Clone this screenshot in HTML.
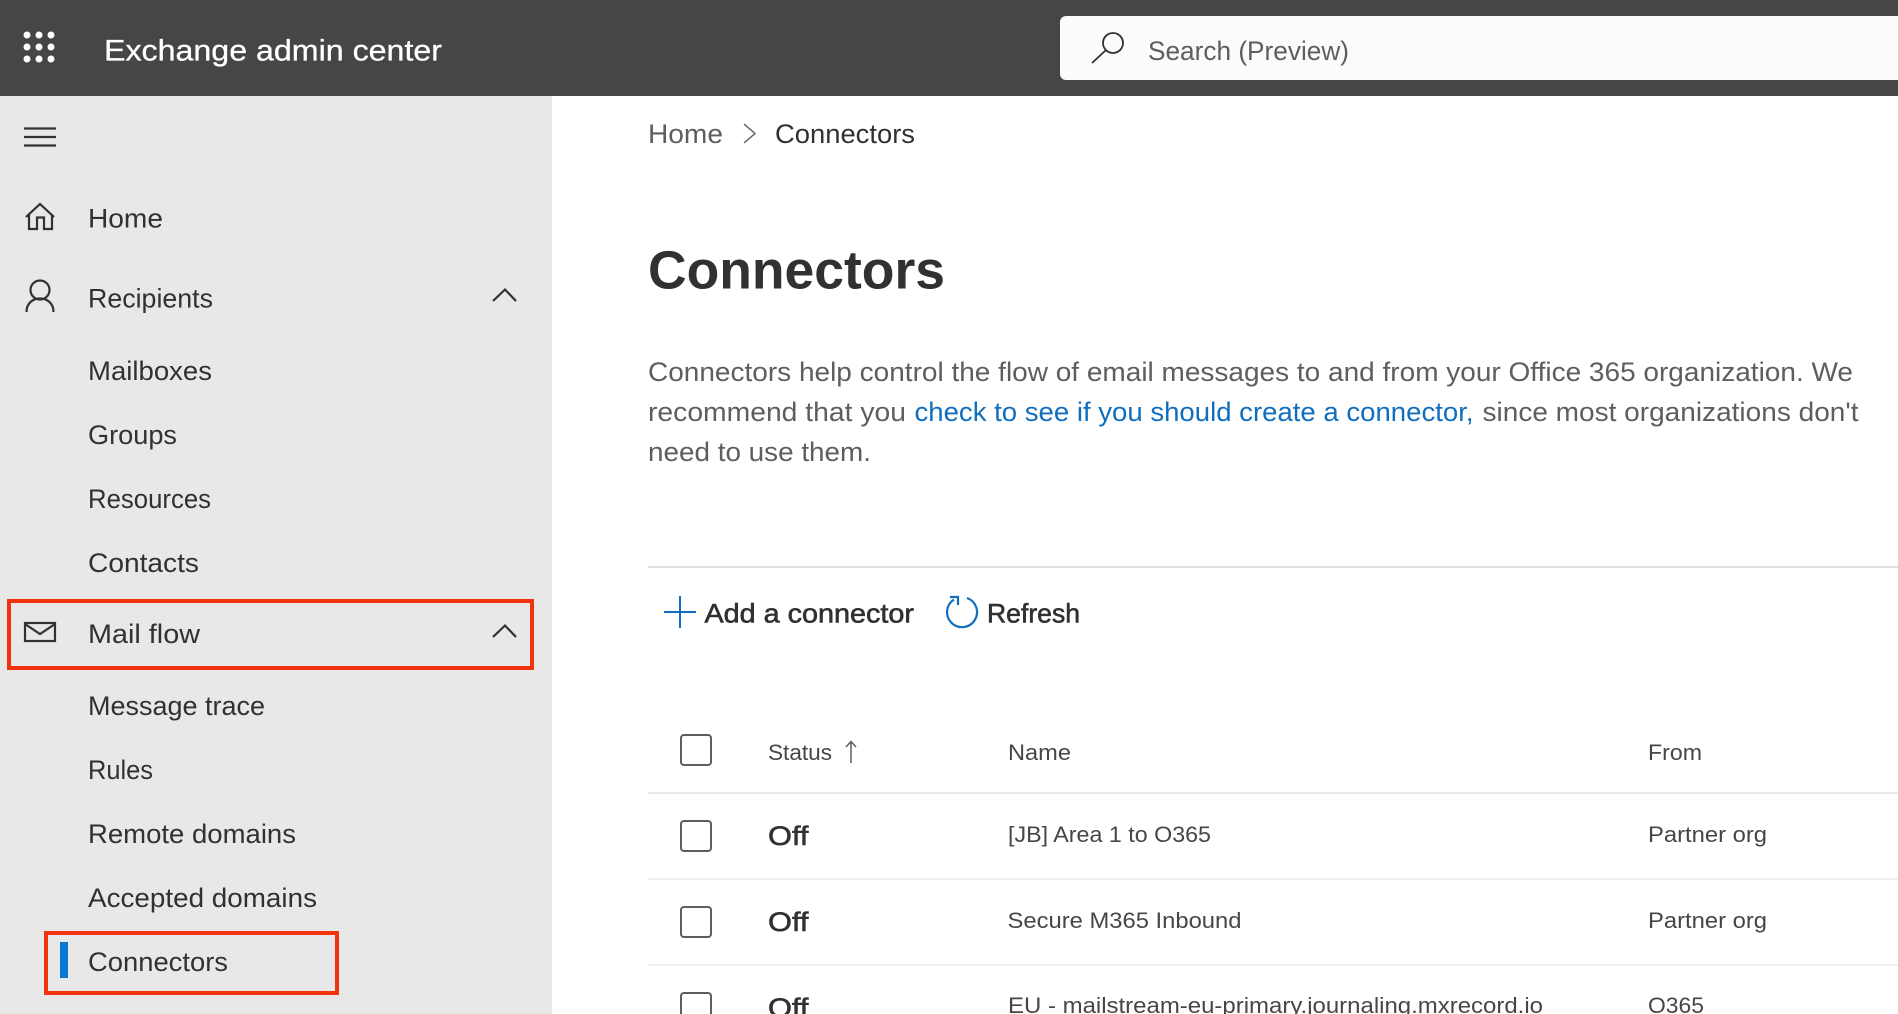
<!DOCTYPE html>
<html lang="en"><head><meta charset="utf-8"><title>Exchange admin center</title>
<style>
html,body{margin:0;padding:0;background:#fff;width:1898px;height:1014px;overflow:hidden}
svg{display:block}
text{font-family:"Liberation Sans",sans-serif;white-space:pre}
.n{font-size:26.5px;fill:#323130}
.p{font-size:26.5px;fill:#605e5c}
.t{font-size:22.5px;fill:#484644}
.ln{fill:none;stroke:#323130;stroke-width:2.2}
.cb{fill:#fff;stroke:#605e5c;stroke-width:2}
</style></head><body>
<svg xmlns="http://www.w3.org/2000/svg" width="1898" height="1014" viewBox="0 0 1898 1014">
<rect width="1898" height="1014" fill="#fff"/>
<rect width="1898" height="96" fill="#484644"/>
<rect y="96" width="552" height="918" fill="#e8e8e8"/>
<g fill="#fff"><circle cx="27" cy="35" r="3.500"/><circle cx="39" cy="35" r="3.500"/><circle cx="51" cy="35" r="3.500"/><circle cx="27" cy="47" r="3.500"/><circle cx="39" cy="47" r="3.500"/><circle cx="51" cy="47" r="3.500"/><circle cx="27" cy="59" r="3.500"/><circle cx="39" cy="59" r="3.500"/><circle cx="51" cy="59" r="3.500"/></g>
<text x="104" y="60.500" font-size="30" fill="#fff" stroke="#fff" stroke-width=".3" textLength="338" lengthAdjust="spacingAndGlyphs">Exchange admin center</text>
<rect x="1060" y="16" width="860" height="64" rx="6" fill="#fbfbfb"/>
<circle cx="1113" cy="43" r="10" fill="none" stroke="#323130" stroke-width="1.800"/>
<path d="M1105.500 50.500L1092 63" fill="none" stroke="#323130" stroke-width="1.800"/>
<text x="1148" y="60" font-size="26.5" fill="#605e5c" textLength="201" lengthAdjust="spacingAndGlyphs">Search (Preview)</text>

<path class="ln" d="M24 128.500H56M24 137H56M24 145.500H56"/>
<path class="ln" d="M26 217L40 204L54 217M29 214V229H37V217.500H44V229H52V214"/>
<text class="n" x="88" y="227.500" textLength="75" lengthAdjust="spacingAndGlyphs">Home</text>
<circle class="ln" cx="40" cy="290" r="9.500"/>
<path class="ln" d="M26.500 312C26.500 303 33 298.500 40 298.500S53.500 303 53.500 312"/>
<text class="n" x="88" y="307.500" textLength="125" lengthAdjust="spacingAndGlyphs">Recipients</text>
<path class="ln" d="M493 301L505 289.500L516 301"/>
<text class="n" x="88" y="380" textLength="124" lengthAdjust="spacingAndGlyphs">Mailboxes</text>
<text class="n" x="88" y="444" textLength="89" lengthAdjust="spacingAndGlyphs">Groups</text>
<text class="n" x="88" y="508" textLength="123" lengthAdjust="spacingAndGlyphs">Resources</text>
<text class="n" x="88" y="572" textLength="111" lengthAdjust="spacingAndGlyphs">Contacts</text>
<rect x="9" y="601" width="523" height="67" fill="none" stroke="#f2330d" stroke-width="4"/>
<rect class="ln" x="25" y="623" width="30" height="18"/>
<path class="ln" d="M25 624L40 634L55 624"/>
<text class="n" x="88" y="643" textLength="112" lengthAdjust="spacingAndGlyphs">Mail flow</text>
<path class="ln" d="M493 637L505 625.500L516 637"/>
<text class="n" x="88" y="715" textLength="177" lengthAdjust="spacingAndGlyphs">Message trace</text>
<text class="n" x="88" y="779" textLength="65" lengthAdjust="spacingAndGlyphs">Rules</text>
<text class="n" x="88" y="843" textLength="208" lengthAdjust="spacingAndGlyphs">Remote domains</text>
<text class="n" x="88" y="907" textLength="229" lengthAdjust="spacingAndGlyphs">Accepted domains</text>
<rect x="46" y="933" width="291" height="60" fill="none" stroke="#f2330d" stroke-width="4"/>
<rect x="60" y="942" width="8" height="36" fill="#0078d4"/>
<text class="n" x="88" y="971" textLength="140" lengthAdjust="spacingAndGlyphs">Connectors</text>

<text x="648" y="143" font-size="26.5" fill="#605e5c" textLength="75" lengthAdjust="spacingAndGlyphs">Home</text>
<path d="M744 124L755 133.500L744 143" fill="none" stroke="#605e5c" stroke-width="1.400"/>
<text class="n" x="775" y="143" textLength="140" lengthAdjust="spacingAndGlyphs">Connectors</text>
<text x="648" y="288.500" font-size="54" font-weight="700" fill="#323130" textLength="297" lengthAdjust="spacingAndGlyphs">Connectors</text>
<text class="p" x="648" y="381" textLength="1205" lengthAdjust="spacingAndGlyphs">Connectors help control the flow of email messages to and from your Office 365 organization. We</text>
<text class="p" x="648" y="421" textLength="258" lengthAdjust="spacingAndGlyphs">recommend that you</text>
<text x="914.500" y="421" font-size="26.5" fill="#106ebe" textLength="559" lengthAdjust="spacingAndGlyphs">check to see if you should create a connector,</text>
<text class="p" x="1482.500" y="421" textLength="376" lengthAdjust="spacingAndGlyphs">since most organizations don't</text>
<text class="p" x="648" y="461" textLength="223" lengthAdjust="spacingAndGlyphs">need to use them.</text>

<rect x="648" y="566" width="1250" height="2" fill="#e1dfdd"/>
<path d="M664 612H696M680 596V628" fill="none" stroke="#106ebe" stroke-width="2"/>
<text x="704.500" y="622.500" font-size="27" fill="#323130" stroke="#323130" stroke-width=".6" textLength="209.500" lengthAdjust="spacingAndGlyphs">Add a connector</text>
<path d="M967 598A15 15 0 1 1 954 599.500" fill="none" stroke="#106ebe" stroke-width="2.200"/>
<path d="M950 597H958V605" fill="none" stroke="#106ebe" stroke-width="2.200"/>
<text x="987" y="622.500" font-size="27" fill="#323130" stroke="#323130" stroke-width=".6" textLength="93" lengthAdjust="spacingAndGlyphs">Refresh</text>

<rect class="cb" x="681" y="735" width="30" height="30" rx="3"/>
<text class="t" x="768" y="760" textLength="64" lengthAdjust="spacingAndGlyphs">Status</text>
<path d="M851 742V763M846 747L851 741.500L856 747" fill="none" stroke="#605e5c" stroke-width="1.500"/>
<text class="t" x="1008" y="760" textLength="63" lengthAdjust="spacingAndGlyphs">Name</text>
<text class="t" x="1648" y="760" textLength="54" lengthAdjust="spacingAndGlyphs">From</text>
<rect x="648" y="792" width="1250" height="2" fill="#ebe9e7"/>

<rect class="cb" x="681" y="821" width="30" height="30" rx="3"/>
<text x="768" y="845" font-size="27" fill="#323130" stroke="#323130" stroke-width=".6" textLength="40.500" lengthAdjust="spacingAndGlyphs">Off</text>
<text class="t" x="1008" y="842" textLength="203" lengthAdjust="spacingAndGlyphs">[JB] Area 1 to O365</text>
<text class="t" x="1648" y="842" textLength="119" lengthAdjust="spacingAndGlyphs">Partner org</text>
<rect x="648" y="878" width="1250" height="2" fill="#f0efee"/>

<rect class="cb" x="681" y="907" width="30" height="30" rx="3"/>
<text x="768" y="931" font-size="27" fill="#323130" stroke="#323130" stroke-width=".6" textLength="40.500" lengthAdjust="spacingAndGlyphs">Off</text>
<text class="t" x="1007.500" y="928" textLength="234" lengthAdjust="spacingAndGlyphs">Secure M365 Inbound</text>
<text class="t" x="1648" y="928" textLength="119" lengthAdjust="spacingAndGlyphs">Partner org</text>
<rect x="648" y="964" width="1250" height="2" fill="#f0efee"/>

<rect class="cb" x="681" y="993" width="30" height="30" rx="3"/>
<text x="768" y="1017" font-size="27" fill="#323130" stroke="#323130" stroke-width=".6" textLength="40.500" lengthAdjust="spacingAndGlyphs">Off</text>
<text class="t" x="1008" y="1013" textLength="535" lengthAdjust="spacingAndGlyphs">EU - mailstream-eu-primary.journaling.mxrecord.io</text>
<text class="t" x="1648" y="1013" textLength="56" lengthAdjust="spacingAndGlyphs">O365</text>
</svg>
</body></html>
